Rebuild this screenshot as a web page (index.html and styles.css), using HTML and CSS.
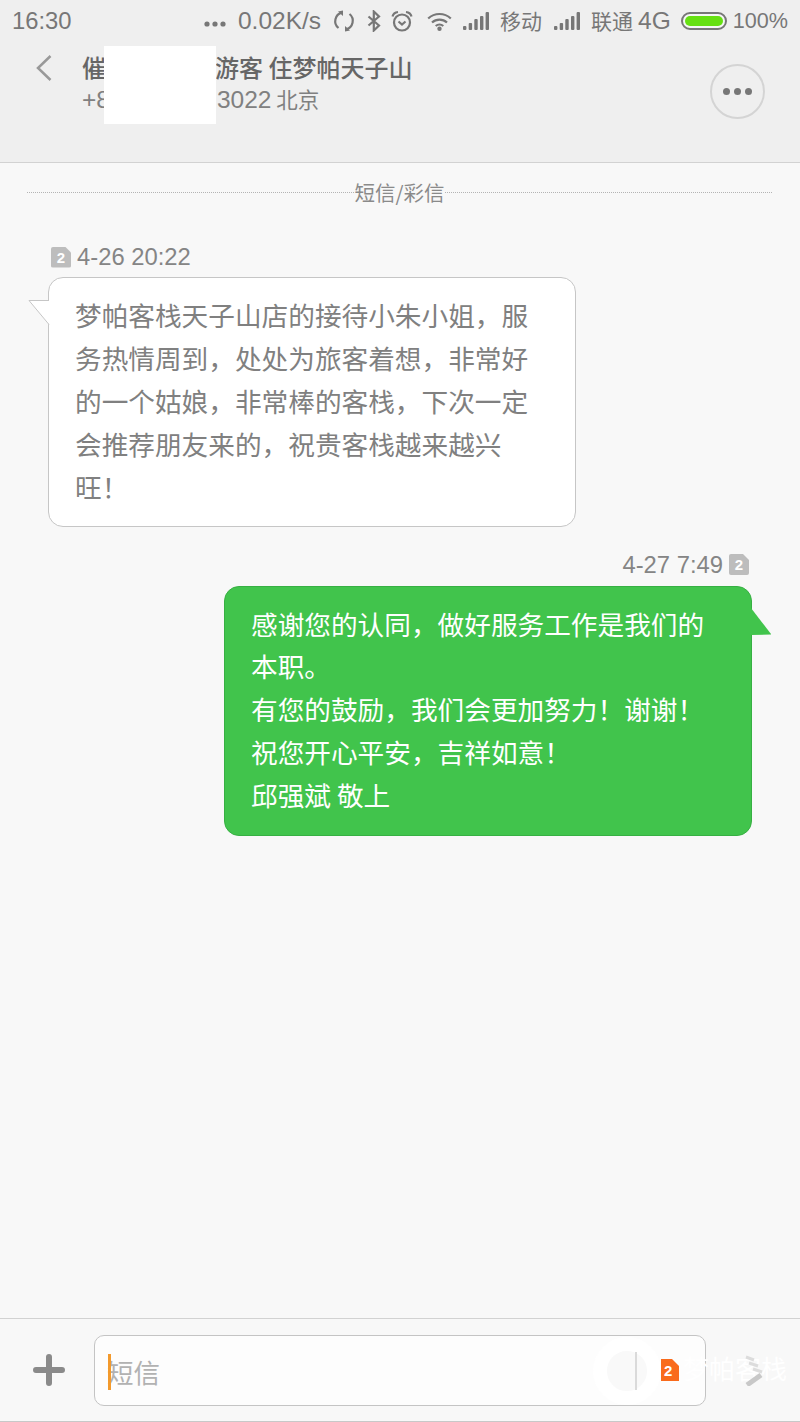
FILE: index.html
```html
<!DOCTYPE html>
<html lang="zh-CN">
<head>
    <meta charset="UTF-8">
    <meta name="viewport" content="width=device-width, initial-scale=1.0">
    <title>短信</title>
    <link rel="stylesheet" href="styles.css">
</head>
<body>

<div class="page">
    <header class="top">
        <div class="status-bar">
            <span class="clock">16:30</span>
            <div class="status-right">
                <svg class="ic-more" width="22" height="6" viewBox="0 0 22 6"><circle cx="3" cy="3" r="2.6"/><circle cx="11" cy="3" r="2.6"/><circle cx="19" cy="3" r="2.6"/></svg>
                <span class="st-text speed">0.02K/s</span>
                <svg class="ic-sync" width="22" height="22" viewBox="0 0 22 22"><path d="M9 2.600A8.800 8.800 0 0 0 5.500 18"/><path d="M13 19.400A8.800 8.800 0 0 0 16.500 4"/><path class="solid" d="M5 1.500l5 -1v5.500zM17 20.500l-5 1v-5.500z"/></svg>
                <svg class="ic-bt" width="14" height="22" viewBox="0 0 14 22"><path d="M1.500 6.500l10.500 9-5.200 5V1.500l5.200 5-10.500 9"/></svg>
                <svg class="ic-alarm" width="22" height="22" viewBox="0 0 22 22"><circle cx="11" cy="12.500" r="8"/><path d="M7.500 11.500l3.500 3 3.500-3M1.500 6.500Q2.500 2.500 7 2M20.500 6.500Q19.500 2.500 15 2"/></svg>
                <svg class="ic-wifi" width="25" height="19" viewBox="0 0 25 19"><path d="M1.200 6.500a16.500 16.500 0 0 1 22.600 0M5 10.500a11 11 0 0 1 15 0M8.700 14a5.800 5.800 0 0 1 7.600 0"/><circle class="solid" cx="12.500" cy="16.800" r="2.200"/></svg>
                <svg class="ic-signal" width="26" height="18" viewBox="0 0 26 18"><rect x="0" y="14" width="3.400" height="4" rx="1"/><rect x="5.700" y="11" width="3.400" height="7" rx="1"/><rect x="11.300" y="7" width="3.400" height="11" rx="1"/><rect x="17" y="4" width="3.400" height="14" rx="1"/><rect x="22.600" y="0" width="3.400" height="18" rx="1"/></svg>
                <span class="st-text carrier">移动</span>
                <svg class="ic-signal ic-signal-2" width="26" height="18" viewBox="0 0 26 18"><rect x="0" y="14" width="3.400" height="4" rx="1"/><rect x="5.700" y="11" width="3.400" height="7" rx="1"/><rect x="11.300" y="7" width="3.400" height="11" rx="1"/><rect x="17" y="4" width="3.400" height="14" rx="1"/><rect x="22.600" y="0" width="3.400" height="18" rx="1"/></svg>
                <span class="st-text carrier">联通</span>
                <span class="st-text net">4G</span>
                <div class="battery"><div class="battery-fill"></div></div>
                <span class="st-text percent">100%</span>
            </div>
        </div>

        <div class="contact-row">
            <svg class="back" width="18" height="28" viewBox="0 0 18 28"><path d="M15.500 2L3 14l12.500 12"/></svg>
            <div class="contact">
                <div class="contact-name">催<span class="name-gap"></span>游客 住梦帕天子山</div>
                <div class="contact-num">+8<span class="num-gap"></span>3022 <span class="contact-city">北京</span></div>
            </div>
            <button class="menu-btn"><span></span><span></span><span></span></button>
        </div>
        <div class="redact"></div>
    </header>

    <main class="thread">
        <div class="divider"><span class="divider-line"></span><span class="divider-text">短信/彩信</span><span class="divider-line"></span></div>

        <div class="meta meta-in">
            <span class="sim">2</span>
            <span>4-26 20:22</span>
        </div>
        <div class="bubble bubble-in">
            <svg class="tail tail-in" width="22" height="26" viewBox="0 0 22 26"><path d="M21 .5H1L21 24.500"/></svg>
            梦帕客栈天子山店的接待小朱小姐，服务热情周到，处处为旅客着想，非常好的一个姑娘，非常棒的客栈，下次一定会推荐朋友来的，祝贵客栈越来越兴旺！
        </div>

        <div class="meta meta-out">
            <span>4-27 7:49</span>
            <span class="sim">2</span>
        </div>
        <div class="bubble bubble-out">
            <svg class="tail tail-out" width="22" height="32" viewBox="0 0 22 32"><path d="M0 0L20 26 20 26.500 0 27z"/></svg>
            感谢您的认同，做好服务工作是我们的<br>本职。<br>有您的鼓励，我们会更加努力！谢谢！<br>祝您开心平安，吉祥如意！<br>邱强斌 敬上
        </div>
    </main>

    <footer class="composer">
        <svg class="plus" width="32" height="32" viewBox="0 0 32 32"><path d="M16 3v26M3 16h26"/></svg>
        <div class="input-box">
            <span class="caret"></span>
            <span class="placeholder">短信</span>
            <svg class="sim-send" width="18" height="22" viewBox="0 0 18 22"><path d="M0 0h11l7 7v15H0z"/><text x="3" y="17">2</text></svg>
        </div>
        <!-- site stamp sitting on top of the input -->
        <div class="stamp">
            <span class="stamp-ring"></span>
            <span class="stamp-bar"></span>
            <span class="stamp-name">梦帕客栈</span>
        </div>
        <svg class="send" width="24" height="32" viewBox="0 0 24 32"><path d="M4 3l8 3M7 9l9 3M11 15l9 3"/><path class="thick" d="M19 21L5 31"/></svg>
    </footer>
</div>

</body>
</html>
```

FILE: styles.css
```css
* {
    box-sizing: border-box;
}
body {
    margin: 0;
    padding: 0;
    background-color: #f8f8f8;
    font-family: "Noto Sans CJK SC", sans-serif;
    color: #777;
}
.page {
    position: relative;
    display: flex;
    flex-direction: column;
    height: 1422px;
    overflow: hidden;
}

/* top area */
.top {
    position: relative;
    height: 163px;
    background-color: #efefef;
    border-bottom: 1px solid #d2d2d2;
}
.status-bar {
    display: flex;
    justify-content: space-between;
    align-items: center;
    height: 42px;
    padding: 0 12px;
    color: #777;
}
.clock {
    font-family: "Liberation Sans", sans-serif;
    font-size: 23.800px;
}
.status-right {
    display: flex;
    align-items: center;
}
.status-right svg {
    fill: #777;
    stroke: #777;
    stroke-width: 2.200;
    flex: none;
}
.status-right .ic-more,
.status-right .ic-signal {
    stroke: none;
}
.ic-sync path,
.ic-bt path,
.ic-alarm circle,
.ic-alarm path,
.ic-wifi path {
    fill: none;
}
.status-right .solid {
    fill: #777;
    stroke: none;
}
.st-text {
    font-family: "Liberation Sans", sans-serif;
    font-size: 24.500px;
    line-height: 28px;
    white-space: nowrap;
}
.ic-more { margin-right: 12px; margin-top: 6px; }
.ic-sync { margin-left: 12px; }
.ic-bt { margin-left: 12px; }
.ic-alarm { margin-left: 10px; }
.ic-wifi { margin-left: 14px; }
.ic-signal { margin-left: 11px; }
.ic-signal-2 { margin-left: 12px; }
.status-right .carrier {
    font-family: "Noto Sans CJK SC", sans-serif;
    font-size: 21px;
    margin-left: 11px;
    margin-top: -3px;
}
.net { margin-left: 5px; }
.battery {
    margin-left: 10px;
    width: 46px;
    height: 18px;
    padding: 2px;
    background-color: #f6f6f6;
    border: 2px solid #777;
    border-radius: 9px;
}
.battery-fill {
    height: 100%;
    border-radius: 6px;
    background-color: #66e012;
}
.status-right .percent {
    font-size: 21.600px;
    margin-left: 6px;
}

.contact-row {
    display: flex;
    align-items: flex-start;
    padding-left: 35px;
}
.back {
    fill: none;
    stroke: #999;
    stroke-width: 2.500;
    margin-top: 12px;
}
.contact {
    margin-left: 29px;
    flex: 1;
}
.contact-name {
    font-size: 24px;
    font-weight: 500;
    line-height: 32px;
    margin-top: 9px;
    color: #666;
    white-space: nowrap;
}
.name-gap {
    display: inline-block;
    width: 109px;
}
.contact-num {
    font-family: "Liberation Sans", sans-serif;
    font-size: 24.500px;
    line-height: 32px;
    color: #808080;
    white-space: nowrap;
}
.num-gap {
    display: inline-block;
    width: 107px;
}
.contact-city {
    font-family: "Noto Sans CJK SC", sans-serif;
    font-size: 21.500px;
    margin-left: -2px;
}
.menu-btn {
    display: flex;
    justify-content: center;
    align-items: center;
    gap: 4px;
    width: 55px;
    height: 55px;
    margin: 22px 35px 0 0;
    padding: 0;
    background: none;
    border: 2px solid #d4d4d4;
    border-radius: 50%;
}
.menu-btn span {
    width: 7px;
    height: 7px;
    border-radius: 50%;
    background-color: #777;
}
.redact {
    position: absolute;
    left: 104px;
    top: 46px;
    width: 112px;
    height: 78px;
    background-color: #fff;
}

/* messages */
.thread {
    flex: 1;
    padding: 0 28px 0 27px;
}
.divider {
    display: flex;
    align-items: center;
    margin-top: 15px;
}
.divider-line {
    flex: 1;
    border-top: 1px dotted #b4b4b4;
}
.divider-text {
    font-size: 20.500px;
    line-height: 28px;
    color: #8a8a8a;
}
.meta {
    display: flex;
    align-items: center;
    gap: 6px;
    font-family: "Liberation Sans", sans-serif;
    font-size: 23.800px;
    line-height: 30px;
    color: #858585;
}
.meta-in {
    margin: 36px 0 0 24px;
}
.meta-out {
    justify-content: flex-end;
    margin: 23px 0 0 0;
}
.sim {
    width: 20px;
    height: 21px;
    border-radius: 2px;
    background-color: #bdbdbd;
    color: #fff;
    font-size: 15px;
    font-weight: 700;
    line-height: 21px;
    text-align: center;
    clip-path: polygon(0 0, 70% 0, 100% 28%, 100% 100%, 0 100%);
}
.meta-out .sim {
    margin-right: 23px;
}
.bubble {
    position: relative;
    width: 528px;
    font-size: 26.660px;
    line-height: 42.900px;
    padding: 16px 26px 17px;
    border-radius: 15px;
}
.bubble-in {
    margin: 5px 0 0 21px;
    background-color: #fff;
    border: 1px solid #c6c6c6;
    color: #808080;
}
.bubble-out {
    margin: 6px 0 0 197px;
    padding-bottom: 18px;
    background-color: #41c44c;
    border: 1px solid #37b043;
    color: #fff;
    white-space: nowrap;
}
.tail {
    position: absolute;
}
.tail-in {
    left: -21px;
    top: 22px;
    fill: #fff;
    stroke: #c6c6c6;
    stroke-width: 1;
}
.tail-out {
    left: 526px;
    top: 21px;
    fill: #41c44c;
}

/* input */
.composer {
    position: relative;
    display: flex;
    align-items: center;
    height: 104px;
    padding-left: 33px;
    background-color: #f8f8f8;
    border-top: 1px solid #d2d2d2;
    border-bottom: 1px solid #c8c8c8;
}
.plus {
    fill: none;
    stroke: #8a8a8a;
    stroke-width: 6;
    stroke-linecap: round;
}
.input-box {
    position: relative;
    display: flex;
    align-items: center;
    justify-content: space-between;
    width: 612px;
    height: 71px;
    margin-left: 29px;
    padding: 0 26px 0 12px;
    background-color: #fdfdfd;
    border: 1px solid #c4c4c4;
    border-radius: 10px;
}
.caret {
    position: absolute;
    left: 13px;
    top: 18px;
    width: 3px;
    height: 36px;
    background-color: #f39a2d;
}
.placeholder {
    font-size: 26.500px;
    color: #b2b2b2;
    margin-top: 3px;
}
.sim-send {
    position: relative;
    z-index: 1;
    fill: #f96b1c;
}
.sim-send text {
    fill: #fff;
    font-family: "Liberation Sans", sans-serif;
    font-size: 15px;
    font-weight: 700;
}
.send {
    position: relative;
    margin-left: 36px;
    fill: none;
    stroke: #dcdcdc;
    stroke-width: 3;
}
.send .thick {
    stroke: #c8c8c8;
    stroke-width: 5;
}
.stamp {
    position: absolute;
    left: 593px;
    top: 18px;
    width: 205px;
    height: 70px;
}
.stamp-ring {
    position: absolute;
    left: 0;
    top: 0;
    width: 68px;
    height: 68px;
    background-color: #f9f9f9;
    border: 14px solid #fff;
    border-radius: 50%;
}
.stamp-bar {
    position: absolute;
    left: 42px;
    top: 15px;
    width: 2px;
    height: 38px;
    background-color: #dadada;
}
.stamp-name {
    position: absolute;
    left: 90px;
    top: 14px;
    font-size: 26px;
    line-height: 34px;
    color: #fff;
    white-space: nowrap;
}
```
